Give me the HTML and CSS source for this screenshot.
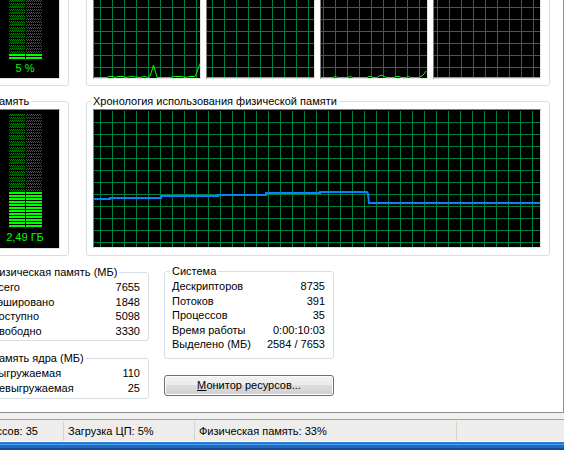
FILE: index.html
```html
<!DOCTYPE html>
<html lang="ru">
<head>
<meta charset="utf-8">
<title>Диспетчер задач — Быстродействие</title>
<link rel="stylesheet" href="styles.css">
</head>
<body>
<div class="tabpage">
  <div class="perf">
    <div class="row row-cpu">
      <fieldset class="grp grp-meter">
        <legend>Загрузка ЦП</legend>
        <div class="meter meter-cpu">
          <div class="bars">
            <div class="bar"><div class="lit" style="height:5px"></div></div>
            <div class="bar"><div class="lit" style="height:5px"></div></div>
          </div>
          <div class="meter-label">5 %</div>
        </div>
      </fieldset>
      <fieldset class="grp grp-hist">
        <legend>Хронология загрузки ЦП</legend>
        <div class="cpu-graphs">
          <div class="graph g1">
            <svg class="plot"><polyline class="cpu-line" points="0,137.5 13,137.5 15,136.5 19,136.5 21,137.5 24,136.5 29,136.5 31,137.5 37,136.5 45,137.5 51,136.5 54,137.5 56,136.5 58,130 59.5,125 61,130 63,137.5 76,137.5 81,136.5 88,136.5 91,137.5 96,136.5 101,136.5 103,132 105,126 107,122"/></svg>
          </div>
          <div class="graph g2">
            <svg class="plot"><polyline class="cpu-line" points="0,137.5 112,137.5"/></svg>
          </div>
          <div class="graph g3">
            <svg class="plot"><polyline class="cpu-line" points="0,137.5 12,137.5 14,136.5 17,137.5 27,137.5 29,136.5 32,137.5 46,137.5 48,136.5 50,136.5 52,137.5 56,137.5 58,136 61,135 63,136.5 65,137.5 73,137.5 75,136.5 78,136.5 80,137.5 85,137.5 87,136.5 89,137.5 98,137.5 101,136 103,134 105,131"/></svg>
          </div>
          <div class="graph g4">
            <svg class="plot"><polyline class="cpu-line" points="0,137.5 112,137.5"/></svg>
          </div>
        </div>
      </fieldset>
    </div>

    <div class="row row-mem">
      <fieldset class="grp grp-meter">
        <legend>Память</legend>
        <div class="meter meter-mem">
          <div class="bars">
            <div class="bar"><div class="lit" style="height:35px"></div></div>
            <div class="bar"><div class="lit" style="height:35px"></div></div>
          </div>
          <div class="meter-label">2,49 ГБ</div>
        </div>
      </fieldset>
      <fieldset class="grp grp-hist">
        <legend>Хронология использования физической памяти</legend>
        <div class="graph graph-mem">
          <svg class="plot"><polyline class="mem-line" points="0,89 16,89 16,88 67,88 67,86 124,86 124,85 172,85 172,83 226,83 226,82 273,82 274,84 275,93 446,93"/></svg>
        </div>
      </fieldset>
    </div>

    <div class="row row-info">
      <div class="col col-left">
        <fieldset class="grp grp-info grp-phys">
          <legend>Физическая память (МБ)</legend>
          <div class="kv"><span>Всего</span><span>7655</span></div>
          <div class="kv"><span>Кэшировано</span><span>1848</span></div>
          <div class="kv"><span>Доступно</span><span>5098</span></div>
          <div class="kv"><span>Свободно</span><span>3330</span></div>
        </fieldset>
        <fieldset class="grp grp-info grp-kernel">
          <legend>Память ядра (МБ)</legend>
          <div class="kv"><span>Выгружаемая</span><span>110</span></div>
          <div class="kv"><span>Невыгружаемая</span><span>25</span></div>
        </fieldset>
      </div>
      <div class="col col-right">
        <fieldset class="grp grp-info grp-sys">
          <legend>Система</legend>
          <div class="kv"><span>Дескрипторов</span><span>8735</span></div>
          <div class="kv"><span>Потоков</span><span>391</span></div>
          <div class="kv"><span>Процессов</span><span>35</span></div>
          <div class="kv"><span>Время работы</span><span>0:00:10:03</span></div>
          <div class="kv"><span>Выделено (МБ)</span><span>2584 / 7653</span></div>
        </fieldset>
        <button class="btn" type="button"><span class="acc">М</span>онитор ресурсов...</button>
      </div>
    </div>
  </div>
</div>
<div class="statusbar">
  <div class="pane pane-proc">Процессов: 35</div>
  <div class="pane pane-cpu">Загрузка ЦП: 5%</div>
  <div class="pane pane-mem">Физическая память: 33%</div>
  <div class="pane pane-rest"></div>
</div>
<div class="frame"></div>
</body>
</html>
```
FILE: styles.css
```css
* { box-sizing: border-box; }

html, body { margin: 0; padding: 0; }

body {
  width: 564px;
  height: 450px;
  overflow: hidden;
  background: #f0f0f0;
  color: #000;
  font-family: "Liberation Sans", Arial, sans-serif;
  font-size: 11px;
}

.tabpage {
  height: 413px;
  background: #fff;
  border-right: 1px solid #8e8f8f;
  border-bottom: 1px solid #8e8f8f;
  overflow: hidden;
}

.perf { margin-left: -17px; }

.row { display: flex; }
.row-cpu { margin-top: -76px; gap: 17px; }
.row-mem { margin-top: 8px; gap: 17px; }
.row-info { margin-top: 9px; gap: 15px; align-items: flex-start; }

/* group boxes */
.grp {
  margin: 0;
  min-width: 0;
  padding: 0 8px 6px 7px;
  border: 1px solid #d5dfe5;
  border-radius: 3px;
}
.grp legend {
  margin-left: -2px;
  padding: 0 2px;
  line-height: 15px;
}
.grp-meter { width: 86px; }
.grp-hist { width: 464px; padding-left: 6px; padding-right: 8px; }
.row-cpu .grp-hist { padding-bottom: 5px; }

/* meters */
.meter {
  width: 69px;
  height: 140px;
  padding-right: 1px;
  background: #000;
  border: 1px solid;
  border-color: #808080 #e3e3e3 #e3e3e3 #808080;
  display: flex;
  flex-direction: column;
  align-items: center;
  justify-content: flex-end;
}
.meter-cpu { padding-bottom: 3px; }
.meter-mem { padding-bottom: 4px; }

.bars { display: flex; gap: 1px; }
.bar {
  width: 16px;
  height: 113px;
  display: flex;
  align-items: flex-end;
  background:
    repeating-linear-gradient(to top, transparent 0 2px, #000 2px 3px),
    repeating-conic-gradient(#008000 0 25%, #000 0 50%) 0 0 / 2px 2px;
}
.lit {
  width: 100%;
  background: repeating-linear-gradient(to top, #00ff00 0 2px, #000 2px 3px);
}
.meter-label {
  line-height: 13px;
  color: #00ff00;
  white-space: nowrap;
}
.meter-cpu .meter-label { margin-top: 3px; }
.meter-mem .meter-label { margin-top: 4px; }

/* graphs */
.cpu-graphs { display: flex; gap: 5px; }
.graph {
  height: 140px;
  background-color: #000;
  background-image:
    linear-gradient(to right, #008040 1px, transparent 1px),
    linear-gradient(to bottom, #008040 1px, transparent 1px);
  background-size: 12px 12px;
  border: 1px solid;
  border-color: #808080 #e3e3e3 #e3e3e3 #808080;
  overflow: hidden;
}
.cpu-graphs .graph { flex: 1; }
.g1 { background-position: 6px 7px; }
.g2 { background-position: 5px 7px; }
.g3 { background-position: 2px 7px; }
.g4 { background-position: 3px 7px; }
.graph-mem {
  height: 139px;
  background-position: 6px 0;
  box-shadow: inset 0 1px 0 #000;
}

.plot { display: block; width: 100%; height: 100%; }
.cpu-line { fill: none; stroke: #00ff00; stroke-width: 1; }
.mem-line { fill: none; stroke: #0a80ff; stroke-width: 2; }

/* info groups */
.col { display: flex; flex-direction: column; }
.col-right { margin-top: -1px; }
.grp-info { padding: 0 8px 2px 7px; }
.grp-phys, .grp-kernel { width: 166px; }
.grp-kernel { margin-top: 10px; }
.grp-sys { width: 170px; padding-bottom: 6px; }

.kv {
  display: flex;
  justify-content: space-between;
  line-height: 14.6px;
  white-space: nowrap;
}

.btn {
  display: block;
  width: 170px;
  height: 21px;
  margin: 16px 0 0;
  padding: 0;
  border: 1px solid #707070;
  border-radius: 3px;
  background: linear-gradient(#f2f2f2 0%, #ebebeb 48%, #dddddd 50%, #cfcfcf 100%);
  box-shadow: inset 0 0 0 1px #fcfcfc;
  color: #000;
  font: inherit;
  line-height: 17px;
  text-align: center;
}
.acc { text-decoration: underline; }

/* status bar */
.statusbar {
  margin-top: 6px;
  height: 23px;
  padding-top: 1px;
  border-top: 1px solid #a0a0a0;
  border-bottom: 1px solid #f8f8f8;
  background: #efedeb;
  display: flex;
  line-height: 20px;
  overflow: hidden;
}
.pane {
  padding-left: 4px;
  border-right: 1px solid #d6d3cd;
  white-space: nowrap;
}
.pane-proc { width: 104px; margin-left: -40px; }
.pane-cpu { width: 131px; }
.pane-mem { width: 262px; }
.pane-rest { flex: 1; border-right: 0; }

.frame {
  height: 8px;
  background: linear-gradient(#2b78d0 0 2px, #4e9de8 2px 3px, #1f6ac6 3px 6px, #164c92 6px 8px);
}
```
